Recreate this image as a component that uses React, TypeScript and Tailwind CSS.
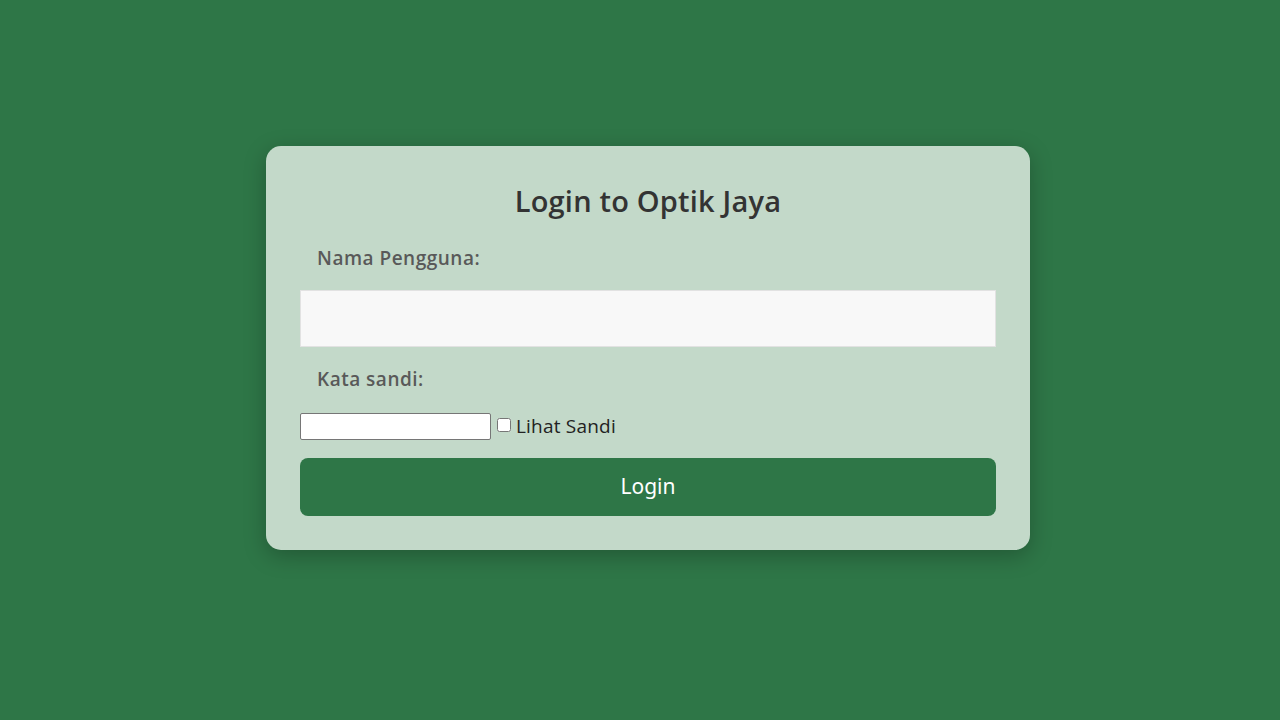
import { useState } from 'react';

export default function App() {
  const [showPassword, setShowPassword] = useState(false);

  return (
    <div className="min-h-screen w-full bg-[#2e7647] flex items-center justify-center pl-[16px] pb-[24px] font-['Open_Sans',sans-serif]">
      <div className="w-[764px] rounded-[15px] bg-[#c3d9c9] px-[34px] py-[34px] shadow-[0_6px_22px_rgba(0,0,0,0.25)]">
        <h2 className="text-center text-[29px] leading-[42px] font-semibold tracking-[0.2px] text-[#333]">
          Login to Optik Jaya
        </h2>

        <label className="mt-[23px] block pl-[17px] text-[19px] leading-[27px] font-semibold tracking-[0.5px] text-[#595959]">
          Nama Pengguna:
        </label>
        <input
          type="text"
          className="mt-[18px] block h-[57px] w-[696px] border border-[#e2e2e2] bg-[#f8f8f8] px-3 outline-none"
        />

        <label className="mt-[19px] block pl-[17px] text-[19px] leading-[27px] font-semibold tracking-[0.5px] text-[#595959]">
          Kata sandi:
        </label>
        <div className="mt-[20px] flex items-center">
          <input
            type={showPassword ? 'text' : 'password'}
            className="h-[27px] w-[191px] rounded-[2px] border border-[#767676] bg-white px-1 text-[13px]"
          />
          <input
            id="lihat"
            type="checkbox"
            checked={showPassword}
            onChange={e => setShowPassword(e.target.checked)}
            className="ml-[6px] mr-[5px] h-[14px] w-[14px] -translate-y-[2px]"
          />
          <label htmlFor="lihat" className="text-[19px] leading-[27px] tracking-[0.2px] text-[#222]">
            Lihat Sandi
          </label>
        </div>

        <button className="mt-[18px] block h-[58px] w-[696px] rounded-[8px] bg-[#2e7647] text-[21px] text-white font-['Noto_Sans',sans-serif]">
          Login
        </button>
      </div>
    </div>
  );
}
